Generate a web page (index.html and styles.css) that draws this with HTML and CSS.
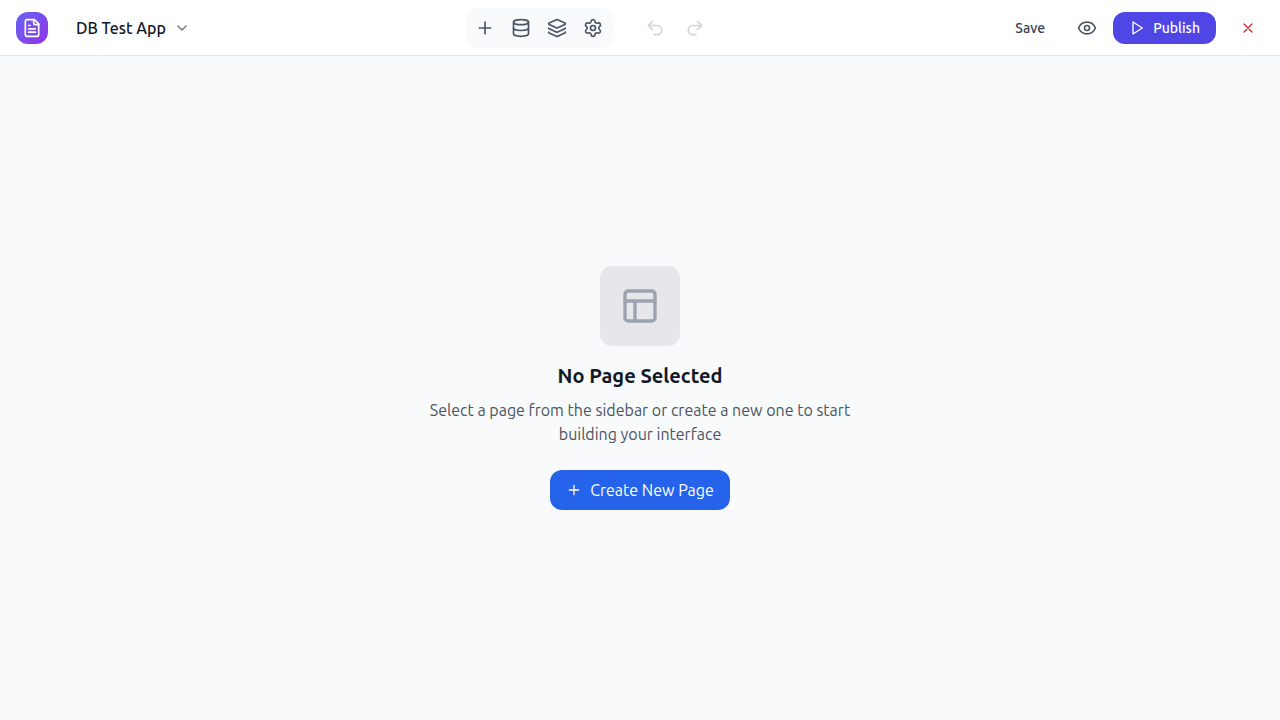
FILE: index.html
```html
<!DOCTYPE html>
<html lang="en">
<head>
<meta charset="utf-8">
<meta name="viewport" content="width=device-width, initial-scale=1">
<title>DB Test App</title>
<link rel="stylesheet" href="styles.css">
</head>
<body>
<header class="topbar">
  <div class="brand">
    <span class="logo"><svg class="icon" viewBox="0 0 24 24" aria-hidden="true"><path d="M15 2H6a2 2 0 0 0-2 2v16a2 2 0 0 0 2 2h12a2 2 0 0 0 2-2V7Z"/><path d="M14 2v4a2 2 0 0 0 2 2h4M10 9H8M16 13H8M16 17H8"/></svg></span>
    <button class="app-menu" type="button">DB Test App<svg class="icon icon-sm" viewBox="0 0 24 24" aria-hidden="true"><path d="m6 9 6 6 6-6"/></svg></button>
  </div>
  <div class="tools">
    <nav class="tool-group" aria-label="Panels">
      <button class="tool" type="button" aria-label="Add"><svg class="icon" viewBox="0 0 24 24"><path d="M5 12h14M12 5v14"/></svg></button>
      <button class="tool" type="button" aria-label="Database"><svg class="icon" viewBox="0 0 24 24"><ellipse cx="12" cy="5" rx="9" ry="3"/><path d="M3 5v14a9 3 0 0 0 18 0V5"/><path d="M3 12a9 3 0 0 0 18 0"/></svg></button>
      <button class="tool" type="button" aria-label="Layers"><svg class="icon" viewBox="0 0 24 24"><path d="M12.83 2.18a2 2 0 0 0-1.66 0L2.6 6.08a1 1 0 0 0 0 1.83l8.58 3.91a2 2 0 0 0 1.66 0l8.58-3.9a1 1 0 0 0 0-1.83z"/><path d="M2 12a1 1 0 0 0 .58.91l8.6 3.91a2 2 0 0 0 1.65 0l8.58-3.9A1 1 0 0 0 22 12"/><path d="M2 17a1 1 0 0 0 .58.91l8.6 3.91a2 2 0 0 0 1.65 0l8.58-3.9A1 1 0 0 0 22 17"/></svg></button>
      <button class="tool" type="button" aria-label="Settings"><svg class="icon" viewBox="0 0 24 24"><path d="M9.671 4.136a2.34 2.34 0 0 1 4.659 0 2.34 2.34 0 0 0 3.319 1.915 2.34 2.34 0 0 1 2.33 4.033 2.34 2.34 0 0 0 0 3.831 2.34 2.34 0 0 1-2.33 4.033 2.34 2.34 0 0 0-3.319 1.915 2.34 2.34 0 0 1-4.659 0 2.34 2.34 0 0 0-3.32-1.915 2.34 2.34 0 0 1-2.33-4.033 2.34 2.34 0 0 0 0-3.831A2.34 2.34 0 0 1 6.35 6.051a2.34 2.34 0 0 0 3.319-1.915"/><circle cx="12" cy="12" r="3"/></svg></button>
    </nav>
    <div class="history">
      <button class="icon-button" type="button" aria-label="Undo" disabled><svg class="icon" viewBox="0 0 24 24"><path d="M9 14 4 9l5-5"/><path d="M4 9h10.5a5.5 5.5 0 0 1 0 11H11"/></svg></button>
      <button class="icon-button" type="button" aria-label="Redo" disabled><svg class="icon" viewBox="0 0 24 24"><path d="m15 14 5-5-5-5"/><path d="M20 9H9.5a5.5 5.5 0 0 0 0 11H13"/></svg></button>
    </div>
  </div>
  <div class="actions">
    <button class="save" type="button">Save</button>
    <button class="icon-button" type="button" aria-label="Preview"><svg class="icon" viewBox="0 0 24 24"><path d="M2.06 12.35a1 1 0 0 1 0-.7 10.75 10.75 0 0 1 19.88 0 1 1 0 0 1 0 .7 10.75 10.75 0 0 1-19.88 0"/><circle cx="12" cy="12" r="3"/></svg></button>
    <button class="publish" type="button"><svg class="icon icon-sm" viewBox="0 0 24 24" aria-hidden="true"><path d="m6 3 14 9-14 9Z"/></svg>Publish</button>
    <button class="close" type="button" aria-label="Close"><svg class="icon icon-sm" viewBox="0 0 24 24"><path d="M18 6 6 18M6 6l12 12"/></svg></button>
  </div>
</header>
<main class="canvas">
  <section class="empty">
    <div class="empty-icon"><svg class="icon icon-lg" viewBox="0 0 24 24" aria-hidden="true"><rect x="3" y="3" width="18" height="18" rx="2"/><path d="M3 9h18M9 21V9"/></svg></div>
    <h1 class="empty-title">No Page Selected</h1>
    <p class="empty-text">Select a page from the sidebar or create a new one to start building your interface</p>
    <button class="create" type="button"><svg class="icon icon-sm" viewBox="0 0 24 24" aria-hidden="true"><path d="M5 12h14M12 5v14"/></svg>Create New Page</button>
  </section>
</main>
</body>
</html>
```
FILE: styles.css
```css
*, *::before, *::after { box-sizing: border-box; }

body {
  margin: 0;
  min-height: 100vh;
  display: flex;
  flex-direction: column;
  background: #f9fafb;
  color: #111827;
  font: 16px/24px Ubuntu, "Noto Sans", "Open Sans", sans-serif;
}

button {
  display: inline-flex;
  align-items: center;
  justify-content: center;
  padding: 0;
  border: 0;
  border-radius: 12px;
  background: transparent;
  color: #4b5563;
  font: inherit;
  white-space: nowrap;
  cursor: pointer;
}

button:disabled { color: #d1d5db; cursor: default; }

.icon {
  flex: none;
  width: 20px;
  height: 20px;
  fill: none;
  stroke: currentColor;
  stroke-width: 2;
  stroke-linecap: round;
  stroke-linejoin: round;
}
.icon-sm { width: 16px; height: 16px; }
.icon-lg { width: 40px; height: 40px; }

.topbar {
  display: flex;
  align-items: center;
  justify-content: space-between;
  height: 56px;
  padding: 0 16px;
  background: #fff;
  border-bottom: 1px solid #e5e7eb;
}

.brand { display: flex; align-items: center; gap: 16px; }
.logo {
  display: flex;
  align-items: center;
  justify-content: center;
  width: 32px;
  height: 32px;
  border-radius: 12px;
  background: linear-gradient(135deg, #6366f1, #9333ea);
  color: #fff;
}
.app-menu { gap: 8px; padding: 6px 12px; color: #111827; font-weight: 500; }
.app-menu .icon { color: #6b7280; }

.tools { display: flex; align-items: center; gap: 24px; padding-right: 24px; }
.tool-group {
  display: flex;
  gap: 4px;
  padding: 4px;
  border-radius: 12px;
  background: #f9fafb;
}
.tool { width: 32px; height: 32px; }
.history { display: flex; gap: 4px; }
.icon-button { width: 36px; height: 36px; }

.actions { display: flex; align-items: center; gap: 8px; }
.save, .publish { height: 32px; padding: 0 16px; font-size: 14px; line-height: 20px; font-weight: 500; }
.save { color: #374151; }
.publish { gap: 8px; background: #4f46e5; color: #fff; }
.close { width: 32px; height: 32px; margin-left: 8px; color: #dc2626; }

.canvas { flex: 1; display: flex; align-items: center; justify-content: center; }
.empty { max-width: 448px; text-align: center; }
.empty-icon {
  display: flex;
  align-items: center;
  justify-content: center;
  width: 80px;
  height: 80px;
  margin: 0 auto 16px;
  border-radius: 12px;
  background: #e5e7eb;
  color: #9ca3af;
}
.empty-title { margin: 0 0 8px; font-size: 20px; line-height: 28px; font-weight: 600; }
.empty-text { margin: 0 0 24px; color: #4b5563; }
.create { gap: 8px; padding: 8px 16px; background: #2563eb; color: #fff; }
```
